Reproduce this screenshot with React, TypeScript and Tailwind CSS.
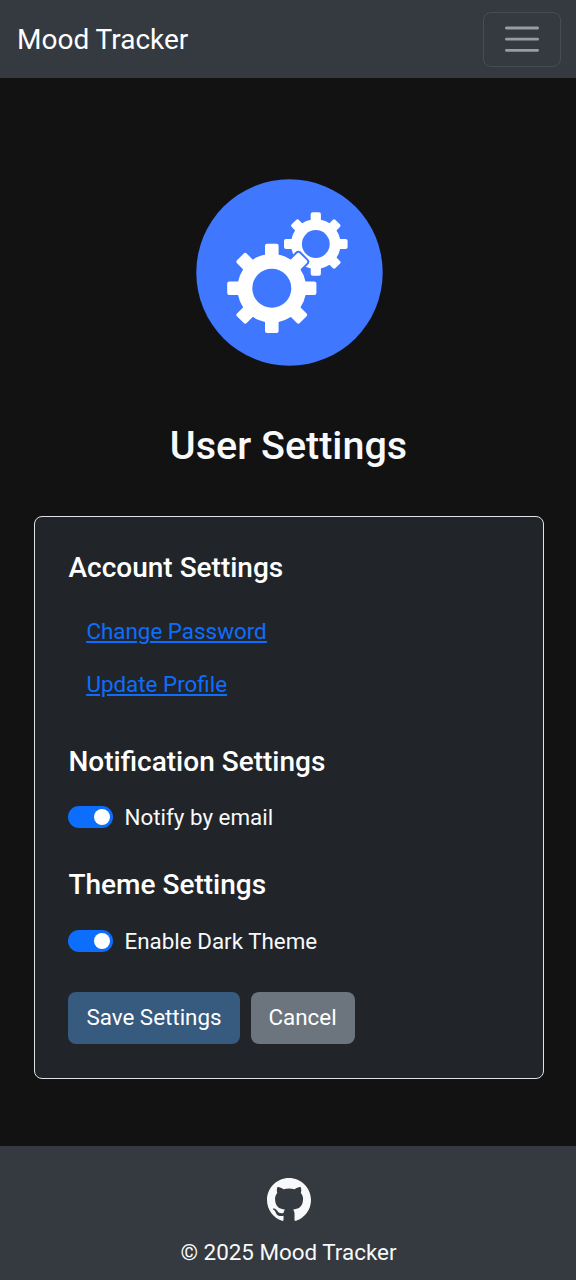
import React from "react";
import { BsGithub } from "react-icons/bs";

const EIGHTHS = [0, 45, 90, 135, 180, 225, 270, 315];

type GearProps = {
  cx: number;
  cy: number;
  body: number;
  reach: number;
  diagonalReach: number;
  tooth: number;
  hole: number;
  gap?: boolean;
};

function Gear({ cx, cy, body, reach, diagonalReach, tooth, hole, gap }: GearProps) {
  const shape = (
    <>
      <circle r={body} />
      {EIGHTHS.map((angle) => {
        const length = angle % 90 === 0 ? reach : diagonalReach;
        return (
          <rect
            key={angle}
            x={-tooth / 2}
            y={-length}
            width={tooth}
            height={length - hole}
            rx="2"
            transform={`rotate(${angle})`}
          />
        );
      })}
    </>
  );
  return (
    <g transform={`translate(${cx} ${cy})`}>
      {gap && (
        <g fill="#4077ff" stroke="#4077ff" strokeWidth="4">
          {shape}
        </g>
      )}
      <g fill="#fff">{shape}</g>
      <circle r={hole} fill="#4077ff" />
    </g>
  );
}

function Toggle({ label }: { label: string }) {
  const [on, setOn] = React.useState(true);
  return (
    <div className="flex h-[34px] items-start">
      <button
        type="button"
        role="switch"
        aria-checked={on}
        aria-label={label}
        onClick={() => setOn(!on)}
        className={`mt-[6px] flex h-[22px] w-[45px] items-center rounded-full px-[3px] ${on ? "justify-end bg-[#0d6efd]" : "justify-start bg-gray-600"}`}
      >
        <span className="size-4 rounded-full bg-white" />
      </button>
      <span className="ml-[11.5px]">{label}</span>
    </div>
  );
}

export default function App() {
  return (
    <div className="flex h-[1280px] w-full flex-col overflow-hidden bg-[#121212] font-[Roboto,sans-serif] text-[22.4px] leading-[34px] text-[#f8f9fa]">
      <nav className="flex h-[78px] shrink-0 items-center justify-between bg-[#343a40] pr-[15px] pl-[17px]">
        <a href="#" className="pt-[2px] text-[28px] text-white">Mood Tracker</a>
        <button
          type="button"
          aria-label="Menu"
          className="flex h-[55px] w-[78px] items-center justify-center rounded-[8px] border border-[#484d53]"
        >
          <svg width="34" height="34" viewBox="0 0 34 34" fill="none" stroke="#999ca0" strokeWidth="2.8" strokeLinecap="round">
            <path d="M1.4 6H32.6M1.4 17.2H32.6M1.4 28.4H32.6" />
          </svg>
        </button>
      </nav>

      <main className="flex flex-col items-center pt-[101px]">
        <svg className="ml-[3px]" width="187" height="187" viewBox="0 0 187 187">
          <circle cx="93.5" cy="93.5" r="93.2" fill="#4077ff" />
          <Gear cx={119.8} cy={65} body={24.8} reach={31.8} diagonalReach={31} tooth={10.2} hole={13.9} />
          <Gear cx={75.8} cy={109.3} body={34.4} reach={44.6} diagonalReach={44.4} tooth={13.6} hole={19.5} gap />
        </svg>
        <h1 className="mt-[56px] ml-px text-[39.5px] leading-[48px] font-medium">User Settings</h1>

        <section className="mt-[46px] mb-[67px] ml-[2px] h-[563px] w-[510px] rounded-[8px] border border-[#dee2e6] bg-[#212529] px-[33px] pt-[34px]">
          <h2 className="pl-[0.5px] text-[28px] font-medium text-white">Account Settings</h2>
          <div className="mt-[29px] flex flex-col items-start gap-[19px] pl-[18.4px] text-[#0d6efd] underline">
            <a href="#">Change Password</a>
            <a href="#">Update Profile</a>
          </div>
          <h2 className="mt-[44px] pl-[0.5px] text-[28px] font-medium text-white">Notification Settings</h2>
          <div className="mt-[21px]">
            <Toggle label="Notify by email" />
          </div>
          <h2 className="mt-[34px] pl-[0.5px] text-[28px] font-medium text-white">Theme Settings</h2>
          <div className="mt-[22px]">
            <Toggle label="Enable Dark Theme" />
          </div>
          <div className="mt-[34px] flex gap-[11px] text-white">
            <button type="button" className="h-[52px] w-[172px] rounded-[8px] bg-[#375a7f] pb-[2px]">Save Settings</button>
            <button type="button" className="h-[52px] w-[104px] rounded-[8px] bg-[#6c757d] pr-px pb-[2px]">Cancel</button>
          </div>
        </section>
      </main>

      <footer className="flex flex-1 flex-col items-center bg-[#343a40] pt-[32px] pl-px">
        <a href="#" aria-label="GitHub">
          <BsGithub className="size-[44px]" />
        </a>
        <p className="mt-[13px]">© 2025 Mood Tracker</p>
      </footer>
    </div>
  );
}
